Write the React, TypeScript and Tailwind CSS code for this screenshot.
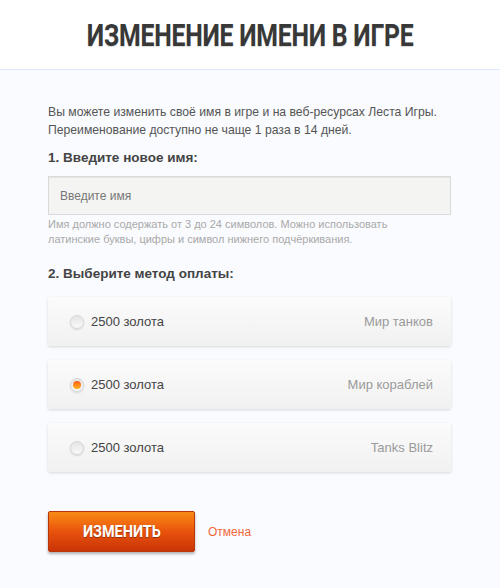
import React from "react";

const options = [
  { label: "2500 золота", game: "Мир танков", checked: false },
  { label: "2500 золота", game: "Мир кораблей", checked: true },
  { label: "2500 золота", game: "Tanks Blitz", checked: false },
];

function Radio({ checked }: { checked: boolean }) {
  return (
    <span className="relative inline-flex h-[14px] w-[14px] items-center justify-center rounded-full border border-[#d6d6d6] bg-gradient-to-b from-[#e4e4e4] to-[#fafafa] shadow-[0_1px_2px_rgba(0,0,0,0.12)]">
      {checked && (
        <span className="h-[8px] w-[8px] rounded-full bg-gradient-to-b from-[#ff5a1a] to-[#ffb21a]" />
      )}
    </span>
  );
}

export default function App() {
  return (
    <div className="min-h-[588px] w-[500px] bg-[#f9fbfe]" style={{ fontFamily: '"Liberation Sans", Arial, sans-serif' }}>
      <div className="flex h-[70px] items-center justify-center border-b border-[#dce9fa] bg-white pt-[4px]">
        <h1
          className="text-[31px] font-bold uppercase tracking-[-0.3px] text-[#383838] [text-shadow:0_1px_1px_rgba(0,0,0,0.15)]"
          style={{ fontFamily: 'Roboto, "Liberation Sans", sans-serif' }}
        >
          <span className="inline-block origin-center scale-x-[0.8]">Изменение имени в игре</span>
        </h1>
      </div>
      <div className="px-[48px] pt-[33px]">
        <p className="text-[12.2px] leading-[18px] text-[#555]">
          Вы можете изменить своё имя в игре и на веб-ресурсах Леста Игры.
          <br />
          Переименование доступно не чаще 1 раза в 14 дней.
        </p>
        <div className="mt-[10px] text-[13.5px] font-bold leading-[18px] text-[#444]">1. Введите новое имя:</div>
        <div className="mt-[9px] flex h-[39px] w-[403px] items-center border border-[#dadada] bg-[#f4f4f3] px-[11px] shadow-[inset_0_1px_1px_rgba(0,0,0,0.06)]">
          <span className="text-[12px] text-[#777]">Введите имя</span>
        </div>
        <p className="mt-[2px] text-[11px] leading-[15px] text-[#a9a9a9]">
          Имя должно содержать от 3 до 24 символов. Можно использовать
          <br />
          латинские буквы, цифры и символ нижнего подчёркивания.
        </p>
        <div className="mt-[18px] text-[13.5px] font-bold leading-[18px] text-[#444]">2. Выберите метод оплаты:</div>
        <div className="mt-[14px] flex w-[403px] flex-col gap-[14px]">
          {options.map((o, i) => (
            <div
              key={i}
              className="flex h-[49px] items-center justify-between rounded-[2px] bg-gradient-to-b from-[#fbfbfb] to-[#f1f1f1] pl-[22px] pr-[18px] shadow-[0_1px_3px_rgba(0,0,0,0.14)]"
            >
              <div className="flex items-center gap-[7px]">
                <Radio checked={o.checked} />
                <span className="text-[13px] text-[#444]">{o.label}</span>
              </div>
              <span className="text-[13px] text-[#9a9a9a]">{o.game}</span>
            </div>
          ))}
        </div>
        <div className="mt-[39px] flex items-center gap-[13px]">
          <button
            className="flex h-[41px] w-[147px] items-center justify-center rounded-[2px] border border-[#b8360a] bg-gradient-to-b from-[#f98a16] via-[#e9520c] to-[#c93408] shadow-[0_2px_3px_rgba(0,0,0,0.3)]"
          >
            <span
              className="inline-block scale-x-[0.85] text-[17px] font-bold uppercase text-white [text-shadow:0_1px_1px_rgba(0,0,0,0.35)]"
              style={{ fontFamily: 'Roboto, "Liberation Sans", sans-serif' }}
            >
              Изменить
            </span>
          </button>
          <span className="text-[12px] text-[#f2683a]">Отмена</span>
        </div>
      </div>
    </div>
  );
}
